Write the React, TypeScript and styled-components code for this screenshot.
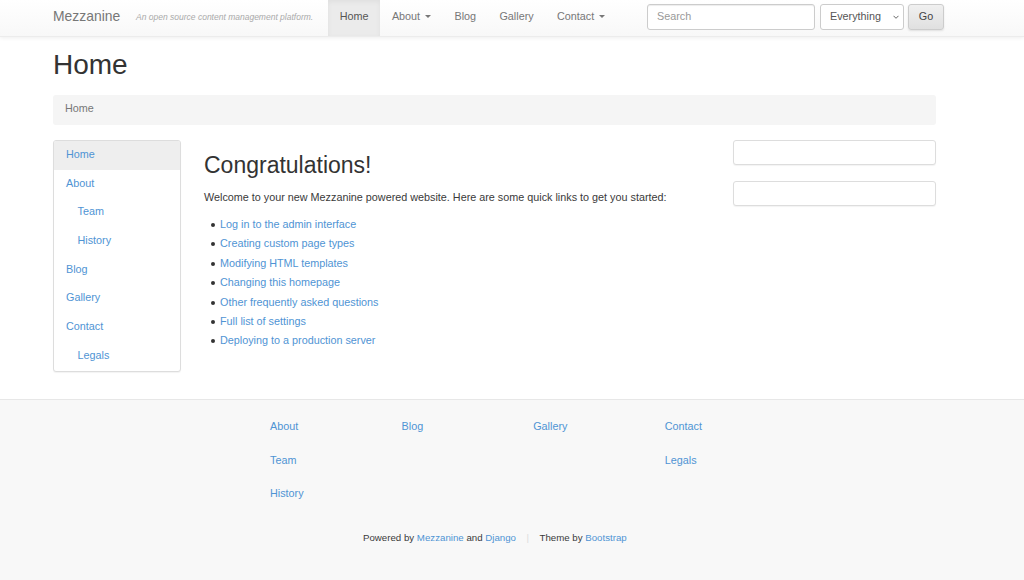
import React, { FC } from 'react'
import styled, { createGlobalStyle } from 'styled-components'

const GlobalStyle = createGlobalStyle`
	html, body {
		margin: 0;
		padding: 0;
		background: #fff;
	}
	body {
		font-family: 'Liberation Sans', Arial, sans-serif;
		font-size: 10.8px;
		line-height: 17px;
		color: #3a3a3a;
	}
	* {
		box-sizing: border-box;
	}
	a {
		color: #4f94d4;
		text-decoration: none;
	}
`

const Page = styled.div`
	width: 1024px;
	height: 580px;
	overflow: hidden;
	display: flex;
	flex-direction: column;
`

const Navbar = styled.nav`
	height: 37px;
	flex: none;
	display: flex;
	align-items: stretch;
	padding-left: 53px;
	background: linear-gradient(to bottom, #ffffff, #f8f8f8);
	border-bottom: 1px solid #ececec;
	box-shadow: 0 1px 4px rgba(0, 0, 0, 0.07);
`

const Brand = styled.a`
	width: 83px;
	font-size: 13.9px;
	line-height: 32px;
	color: #777;
`

const Tagline = styled.span`
	width: 192px;
	font-size: 8.5px;
	font-style: italic;
	line-height: 34px;
	color: #aaa;
	white-space: nowrap;
`

const NavItem = styled.a<{ $active?: boolean }>`
	display: flex;
	align-items: center;
	height: 36px;
	padding: 0 11.7px 4px;
	color: ${(p) => (p.$active ? '#555' : '#777')};
	background: ${(p) => (p.$active ? '#ebebeb' : 'transparent')};
	box-shadow: ${(p) => (p.$active ? 'inset 0 2px 5px rgba(0, 0, 0, 0.05)' : 'none')};
`

const Caret = styled.span`
	display: inline-block;
	margin-left: 5px;
	border-top: 3px solid #777;
	border-left: 3px solid transparent;
	border-right: 3px solid transparent;
`

const SearchForm = styled.form`
	display: flex;
	margin-left: 30px;
	padding-top: 4px;
`

const SearchInput = styled.input`
	width: 168px;
	height: 26px;
	margin-right: 5px;
	padding: 0 9px 2px;
	font: inherit;
	color: #555;
	background: #fff;
	border: 1px solid #ccc;
	border-radius: 3px;
	box-shadow: inset 0 1px 1px rgba(0, 0, 0, 0.075);

	&::placeholder {
		color: #999;
		opacity: 1;
	}
`

const SelectWrap = styled.div`
	position: relative;
	width: 84px;
	height: 26px;
	margin-right: 4px;
`

const SearchSelect = styled.select`
	width: 100%;
	height: 100%;
	padding: 0 0 2px 9px;
	appearance: none;
	font: inherit;
	color: #555;
	background: #fff;
	border: 1px solid #ccc;
	border-radius: 3px;
`

const Chevron = styled.svg`
	position: absolute;
	top: 11px;
	right: 4.5px;
	width: 6px;
	height: 4px;
	fill: none;
	stroke: #666;
	stroke-width: 1;
`

const GoButton = styled.button`
	width: 36px;
	height: 26px;
	padding: 0 0 2px;
	font: inherit;
	color: #444;
	background: linear-gradient(to bottom, #f0f0f0, #e0e0e0);
	border: 1px solid #ccc;
	border-radius: 3px;
	box-shadow: 0 1px 2px rgba(0, 0, 0, 0.1);
`

const Content = styled.main`
	flex: none;
	width: 883px;
	height: 362px;
	margin-left: 53px;
`

const PageTitle = styled.h1`
	margin: 0;
	padding-top: 11px;
	font-size: 28px;
	font-weight: 400;
	line-height: 34px;
	color: #333;
`

const Breadcrumb = styled.div`
	height: 30px;
	margin-top: 13px;
	padding-left: 12px;
	line-height: 27px;
	color: #777;
	background: #f5f5f5;
	border-radius: 3px;
`

const Columns = styled.div`
	display: flex;
	margin-top: 15px;
`

const SideNav = styled.div`
	flex: none;
	width: 128px;
	height: 232px;
	background: #fff;
	border: 1px solid #ddd;
	border-radius: 3px;
	box-shadow: 0 1px 1px rgba(0, 0, 0, 0.05);
	overflow: hidden;
`

const SideLink = styled.a<{ $active?: boolean; $child?: boolean }>`
	display: block;
	height: 28.7px;
	padding-left: ${(p) => (p.$child ? '23.5px' : '12px')};
	line-height: 27px;
	background: ${(p) => (p.$active ? '#eee' : 'transparent')};
`

const Main = styled.section`
	flex: none;
	width: 529px;
	margin-left: 23px;
`

const Heading = styled.h2`
	margin: 0;
	padding-top: 11px;
	font-size: 23px;
	font-weight: 400;
	line-height: 29px;
	color: #333;
`

const Intro = styled.p`
	margin: 9px 0 0;
	line-height: 17px;
`

const LinkList = styled.ul`
	margin: 9px 0 0;
	padding: 0 0 0 16px;
	list-style: none;
`

const LinkItem = styled.li`
	position: relative;
	height: 19.4px;
	line-height: 19px;

	&::before {
		content: '';
		position: absolute;
		left: -9.5px;
		top: 8px;
		width: 4px;
		height: 4px;
		border-radius: 50%;
		background: #333;
	}
`

const SideBoxes = styled.aside`
	flex: none;
	width: 203px;
	display: flex;
	flex-direction: column;
	gap: 15.5px;
`

const EmptyBox = styled.div`
	height: 25px;
	background: #fff;
	border: 1px solid #ddd;
	border-radius: 3px;
	box-shadow: 0 1px 1px rgba(0, 0, 0, 0.05);
`

const Footer = styled.footer`
	flex: 1;
	background: #f8f8f8;
	border-top: 1px solid #e7e7e7;
	padding: 18px 0 0 270px;
`

const FooterColumns = styled.div`
	display: flex;
	height: 110px;
`

const FooterColumn = styled.div`
	flex: none;
	width: 131.6px;
	display: flex;
	flex-direction: column;
`

const FooterLink = styled.a`
	display: block;
	height: 33.5px;
	line-height: 17px;
`

const Credits = styled.p`
	margin: 1px 0 0 93px;
	font-size: 9.7px;
	line-height: 17px;
`

const CreditDivider = styled.span`
	margin: 0 10.5px;
	color: #ddd;
`

const menu = [
	{ label: 'Home', active: true },
	{ label: 'About' },
	{ label: 'Team', child: true },
	{ label: 'History', child: true },
	{ label: 'Blog' },
	{ label: 'Gallery' },
	{ label: 'Contact' },
	{ label: 'Legals', child: true },
]

const quickLinks = [
	'Log in to the admin interface',
	'Creating custom page types',
	'Modifying HTML templates',
	'Changing this homepage',
	'Other frequently asked questions',
	'Full list of settings',
	'Deploying to a production server',
]

const footerLinks = [['About', 'Team', 'History'], ['Blog'], ['Gallery'], ['Contact', 'Legals']]

const App: FC = () => {
	return (
		<Page>
			<GlobalStyle />
			<Navbar>
				<Brand href="#">Mezzanine</Brand>
				<Tagline>An open source content management platform.</Tagline>
				<NavItem href="#" $active>
					Home
				</NavItem>
				<NavItem href="#">
					About
					<Caret />
				</NavItem>
				<NavItem href="#">Blog</NavItem>
				<NavItem href="#">Gallery</NavItem>
				<NavItem href="#">
					Contact
					<Caret />
				</NavItem>
				<SearchForm>
					<SearchInput placeholder="Search" />
					<SelectWrap>
						<SearchSelect defaultValue="Everything">
							<option>Everything</option>
						</SearchSelect>
						<Chevron viewBox="0 0 6 4">
							<path d="M0.5 0.8 L3 3.3 L5.5 0.8" />
						</Chevron>
					</SelectWrap>
					<GoButton type="button">Go</GoButton>
				</SearchForm>
			</Navbar>
			<Content>
				<PageTitle>Home</PageTitle>
				<Breadcrumb>Home</Breadcrumb>
				<Columns>
					<SideNav>
						{menu.map((item) => (
							<SideLink key={item.label} href="#" $active={item.active} $child={item.child}>
								{item.label}
							</SideLink>
						))}
					</SideNav>
					<Main>
						<Heading>Congratulations!</Heading>
						<Intro>Welcome to your new Mezzanine powered website. Here are some quick links to get you started:</Intro>
						<LinkList>
							{quickLinks.map((label) => (
								<LinkItem key={label}>
									<a href="#">{label}</a>
								</LinkItem>
							))}
						</LinkList>
					</Main>
					<SideBoxes>
						<EmptyBox />
						<EmptyBox />
					</SideBoxes>
				</Columns>
			</Content>
			<Footer>
				<FooterColumns>
					{footerLinks.map((links) => (
						<FooterColumn key={links[0]}>
							{links.map((label) => (
								<FooterLink key={label} href="#">
									{label}
								</FooterLink>
							))}
						</FooterColumn>
					))}
				</FooterColumns>
				<Credits>
					Powered by <a href="#">Mezzanine</a> and <a href="#">Django</a>
					<CreditDivider>|</CreditDivider>
					Theme by <a href="#">Bootstrap</a>
				</Credits>
			</Footer>
		</Page>
	)
}

export default App
